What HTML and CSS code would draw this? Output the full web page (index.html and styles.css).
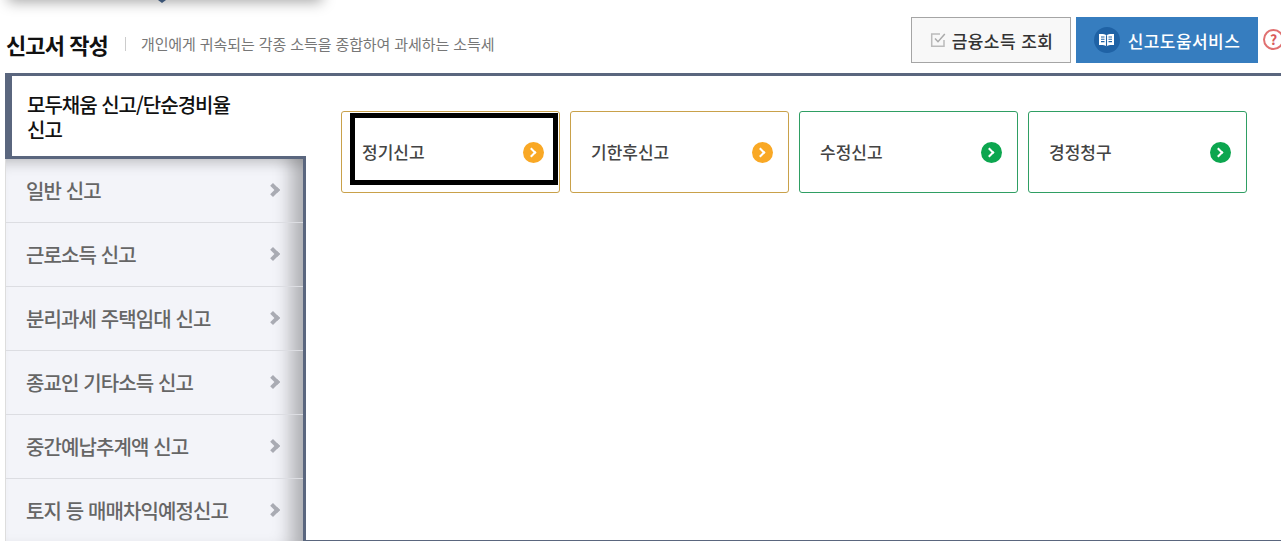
FILE: index.html
```html
<!DOCTYPE html>
<html lang="ko">
<head>
  <meta charset="UTF-8">
  <title>신고서 작성</title>
  <link rel="stylesheet" href="styles.css">
</head>
<body>
  <div class="top-menu-shadow"><span class="top-menu-tip"></span></div>

  <div class="page-head">
    <h1>신고서 작성</h1>
    <p class="page-desc">개인에게 귀속되는 각종 소득을 종합하여 과세하는 소득세</p>
    <div class="head-actions">
      <a class="btn-income">
        <svg width="18" height="18" viewBox="0 0 18 18" fill="none" stroke="#bbb" stroke-width="1.5">
          <path d="M15 9v6.300H2.700V3H11"/>
          <path d="M6 7.500l3 3.200L15.800 3" stroke="#aaa"/>
        </svg>
        금융소득 조회
      </a>
      <a class="btn-help">
        <span class="book-circle">
          <svg width="17" height="14" viewBox="0 0 17 14">
            <path d="M8.500 2.300C7 1 4 .7 1 1v11c3-.2 6 0 7.500 1.300C10 12 13 11.800 16 12V1c-3-.3-6 0-7.500 1.300z" fill="#fff"/>
            <path d="M8.500 2.300v11M3 4h3.500M3 6.300h3.500M3 8.600h3.500M10.500 4H14M10.500 6.300H14M10.500 8.600H14" stroke="#1f62a5" stroke-width="1.100" fill="none"/>
          </svg>
        </span>
        신고도움서비스
      </a>
      <span class="help-mark">?</span>
    </div>
  </div>

  <div class="tab-wrap">
    <div class="side-tabs">
      <div class="side-active">모두채움 신고/단순경비율<br>신고</div>
      <ul class="side-list">
        <li>일반 신고</li>
        <li>근로소득 신고</li>
        <li>분리과세 주택임대 신고</li>
        <li>종교인 기타소득 신고</li>
        <li>중간예납추계액 신고</li>
        <li>토지 등 매매차익예정신고</li>
      </ul>
    </div>
    <div class="card-row">
      <a class="card card-yellow"><span class="card-label">정기신고</span><span class="go"></span><span class="focus-ring"></span></a>
      <a class="card card-yellow"><span class="card-label">기한후신고</span><span class="go"></span></a>
      <a class="card card-green"><span class="card-label">수정신고</span><span class="go"></span></a>
      <a class="card card-green"><span class="card-label">경정청구</span><span class="go"></span></a>
    </div>
  </div>
</body>
</html>
```

FILE: styles.css
```css
html, body {
  margin: 0;
  padding: 0;
  height: 541px;
  overflow: hidden;
  background: #fff;
}
body {
  font-family: "Noto Sans CJK KR", "Noto Sans", sans-serif;
  color: #333;
  position: relative;
}
ul {
  list-style: none;
  margin: 0;
  padding: 0;
}
.top-menu-shadow {
  position: absolute;
  left: 8px;
  top: -20px;
  width: 314px;
  height: 20px;
  background: #fff;
  box-shadow: 0 2px 14px rgba(0, 0, 0, 0.35);
}
.top-menu-tip {
  position: absolute;
  left: 150px;
  top: 20px;
  width: 0;
  height: 0;
  border-left: 4px solid transparent;
  border-right: 4px solid transparent;
  border-top: 3px solid #3b5475;
}
.page-head {
  display: flex;
  align-items: center;
  height: 73px;
  padding: 17px 0 10px 6px;
  box-sizing: border-box;
}
.page-head h1 {
  margin: 0;
  font-size: 22px;
  font-weight: 700;
  letter-spacing: -0.9px;
  line-height: 46px;
  color: #111;
  position: relative;
  top: 4px;
}
.page-desc {
  margin: 0 0 0 17px;
  padding-left: 15px;
  font-size: 15px;
  line-height: 14px;
  letter-spacing: -0.1px;
  color: #777;
  border-left: 1px solid #ccc;
  position: relative;
  top: 4px;
}
.head-actions {
  margin-left: auto;
  display: flex;
  align-items: center;
  gap: 5px;
  height: 46px;
}
.btn-income, .btn-help {
  display: flex;
  align-items: center;
  justify-content: center;
  height: 46px;
  box-sizing: border-box;
  font-size: 17px;
  font-weight: 500;
  letter-spacing: 0.45px;
}
.btn-income {
  width: 160px;
  gap: 5px;
  border: 1px solid #a5a5a5;
  background: #f8f8f8;
  color: #333;
}
.btn-help {
  width: 182px;
  gap: 8px;
  background: #367dbf;
  color: #fff;
}
.book-circle {
  display: flex;
  align-items: center;
  justify-content: center;
  width: 26px;
  height: 26px;
  border-radius: 50%;
  background: #1f62a5;
}
.help-mark {
  display: flex;
  align-items: center;
  justify-content: center;
  flex: none;
  width: 17px;
  height: 17px;
  margin-right: -3px;
  margin-bottom: 2px;
  border: 2px solid #e07070;
  border-radius: 50%;
  font-size: 14px;
  font-weight: 700;
  color: #d95a5a;
}
.tab-wrap {
  display: flex;
  height: 468px;
  margin-left: 5px;
  box-sizing: border-box;
  border-top: 3px solid #5a667e;
  border-bottom: 1px solid #5a667e;
}
.side-tabs {
  width: 301px;
  flex: none;
  box-sizing: border-box;
  border-right: 3px solid #5a667e;
  margin-right: -3px;
}
.side-active {
  margin-right: -3px;
  height: 83px;
  box-sizing: border-box;
  padding: 16px 0 0 15px;
  background: #fff;
  border-left: 7px solid #5a667e;
  border-bottom: 3px solid #5a667e;
  font-size: 20px;
  font-weight: 500;
  line-height: 25px;
  letter-spacing: -1px;
  color: #111;
}
.side-list {
  background: #f3f4f9;
  border-left: 1px solid #ddd;
  height: 382px;
  box-shadow: inset -24px 0 18px -12px rgba(0, 0, 0, 0.28), inset 0 14px 14px -10px rgba(0, 0, 0, 0.2);
}
.side-list li {
  position: relative;
  height: 64px;
  box-sizing: border-box;
  padding-left: 20px;
  border-bottom: 1px solid #dcdde2;
  font-size: 20px;
  font-weight: 500;
  line-height: 64px;
  letter-spacing: -0.9px;
  color: #666;
}
.side-list li::after {
  content: "";
  position: absolute;
  right: 25px;
  top: 26px;
  width: 6px;
  height: 6px;
  border-top: 4px solid #a9abb3;
  border-right: 4px solid #a9abb3;
  transform: rotate(45deg);
}
.card-row {
  display: flex;
  gap: 10px;
  padding: 35px 0 0 38px;
}
.card {
  position: relative;
  display: flex;
  align-items: center;
  justify-content: space-between;
  width: 219px;
  height: 82px;
  box-sizing: border-box;
  padding: 0 15px 0 20px;
  border: 1px solid;
  border-radius: 3px;
  font-size: 17px;
  font-weight: 500;
  letter-spacing: 0;
  color: #444;
}
.card-label {
  margin-bottom: 2px;
}
.card-yellow {
  border-color: #c9a14a;
}
.card-green {
  border-color: #2f9e63;
}
.go {
  position: relative;
  width: 21px;
  height: 21px;
  border-radius: 50%;
}
.card-yellow .go {
  background: #f9a825;
}
.card-green .go {
  background: #0ca64f;
}
.go::after {
  content: "";
  position: absolute;
  left: 5px;
  top: 7px;
  width: 5px;
  height: 5px;
  border-top: 2px solid #fff;
  border-right: 2px solid #fff;
  transform: rotate(45deg);
}
.focus-ring {
  position: absolute;
  left: 8px;
  top: 1px;
  width: 208px;
  height: 72px;
  box-sizing: border-box;
  border: 5px solid #000;
}
```
